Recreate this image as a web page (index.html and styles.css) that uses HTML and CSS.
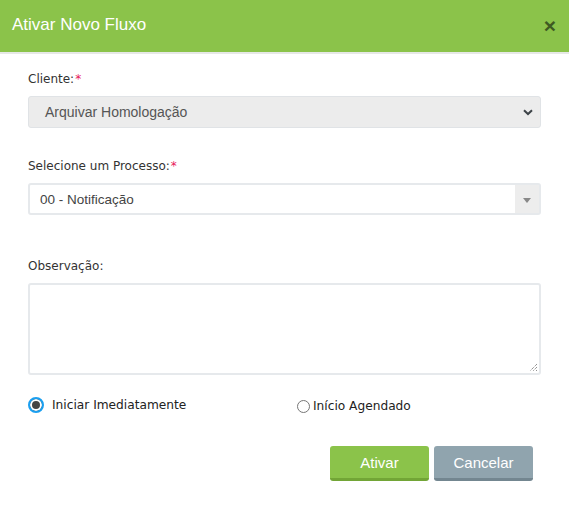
FILE: index.html
```html
<!DOCTYPE html>
<html lang="pt">
<head>
<meta charset="utf-8">
<link rel="stylesheet" href="styles.css">
</head>
<body>
<div class="modal">
  <div class="modal-header">
    <h4 class="modal-title">Ativar Novo Fluxo</h4>
    <span class="close">&#215;</span>
  </div>
  <div class="modal-body">
    <div class="field">
      <label class="label">Cliente:<span class="req">*</span></label>
      <div class="select-native">
        <span>Arquivar Homologação</span>
        <svg class="chev" width="10" height="7" viewBox="0 0 10 7"><path d="M1 1.2 L5 5 L9 1.2" fill="none" stroke="#3d4348" stroke-width="2"/></svg>
      </div>
    </div>
    <div class="field">
      <label class="label">Selecione um Processo:<span class="req">*</span></label>
      <div class="select2">
        <span class="s2-text">00 - Notificação</span>
        <span class="s2-arrow"><span class="tri"></span></span>
      </div>
    </div>
    <div class="field obs">
      <label class="label">Observação:</label>
      <div class="textarea">
        <svg class="grip" width="9" height="9" viewBox="0 0 9 9"><path d="M8 1 L1 8 M8 4 L4 8 M8 7 L7 8" stroke="#666" stroke-width="1" stroke-dasharray="1 1"/></svg>
      </div>
    </div>
    <div class="radios">
      <label class="radio r1"><span class="dot checked"></span>Iniciar Imediatamente</label>
      <label class="radio r2"><span class="dot"></span>Início Agendado</label>
    </div>
    <div class="actions">
      <button class="btn btn-green">Ativar</button>
      <button class="btn btn-gray">Cancelar</button>
    </div>
  </div>
</div>
</body>
</html>
```
FILE: styles.css
```css
* { box-sizing: border-box; }
html, body { margin: 0; padding: 0; background: #fff; }
body { font-family: "Liberation Sans", Arial, sans-serif; }
.modal { width: 569px; height: 513px; background: #fff; }
.modal-header {
  height: 54px;
  background: #8bc34a;
  border-bottom: 2px solid #e6e8e6;
  display: flex;
  align-items: center;
  justify-content: space-between;
  padding: 0 12px 2px 12px;
}
.modal-title { margin: 0; color: #fff; font-weight: normal; font-size: 17px; }
.close { color: #3e5a22; font-size: 21px; font-weight: bold; line-height: 1; margin-right: 1px; }
.modal-body { padding: 16px 28px 0 28px; }
.field { display: flex; flex-direction: column; }
.label {
  font-family: "DejaVu Sans", Verdana, sans-serif;
  font-size: 12px;
  color: #333;
  height: 18px;
  line-height: 18px;
  margin-bottom: 8px;
}
.req { color: #e8185a; margin-left: 1px; }
.select-native {
  height: 32px;
  width: 513px;
  background: #ececec;
  border: 1px solid #e0e3e6;
  border-radius: 3px;
  display: flex;
  align-items: center;
  justify-content: space-between;
  padding: 0 7px 0 16px;
  font-size: 14px;
  color: #555;
  margin-bottom: 29px;
}
.chev { margin-top: 1px; }
.select2 {
  height: 32px;
  width: 513px;
  border: 2px solid #e6e9ec;
  border-radius: 3px;
  display: flex;
  align-items: stretch;
  font-size: 13.5px;
  color: #444;
  margin-bottom: 42px;
}
.s2-text { flex: 1; display: flex; align-items: center; padding-left: 10px; }
.s2-arrow {
  width: 24px;
  background: #ededed;
  display: flex;
  align-items: center;
  justify-content: center;
}
.tri { width: 0; height: 0; border-left: 4px solid transparent; border-right: 4px solid transparent; border-top: 5px solid #888; margin-top: 3px; }
.textarea {
  position: relative;
  width: 513px;
  height: 92px;
  border: 2px solid #e6e9ec;
  border-radius: 3px;
  margin-bottom: 21px;
}
.grip { position: absolute; right: 1px; bottom: 1px; }
.radios {
  display: flex;
  align-items: center;
  font-family: "DejaVu Sans", Verdana, sans-serif;
  font-size: 12.2px;
  color: #222;
}
.radio { display: flex; align-items: center; }
.r1 { width: 269px; }
.r2 { margin-top: 3px; }
.dot {
  display: inline-block;
  border-radius: 50%;
  border: 1px solid #767676;
  width: 13px; height: 13px;
  margin-right: 3px;
}
.dot.checked {
  width: 16px; height: 16px;
  border: 2px solid #1a9ff0;
  background: #444;
  box-shadow: inset 0 0 0 2px #fff;
  margin-right: 8px;
}
.actions { display: flex; justify-content: flex-end; gap: 5px; margin-top: 33px; padding-right: 8px; }
.btn {
  width: 99px;
  height: 35px;
  border: 0;
  border-radius: 3px;
  color: #fff;
  font-family: "Liberation Sans", Arial, sans-serif;
  font-size: 15px;
  padding: 0;
}
.btn-green { background: #8bc34a; border-bottom: 3px solid #72a536; }
.btn-gray { background: #90a4ae; border-bottom: 3px solid #738690; }
```
